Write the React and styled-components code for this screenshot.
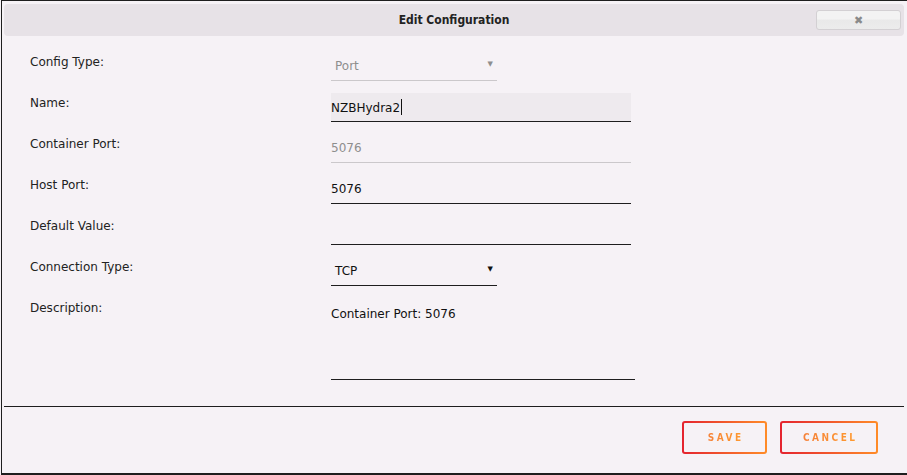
import React from 'react';
import styled, { createGlobalStyle, css } from 'styled-components';

const GlobalStyle = createGlobalStyle`
  html, body {
    margin: 0;
    padding: 0;
    background: #f6f2f6;
    overflow: hidden;
  }
  * {
    box-sizing: border-box;
  }
`;

const Dialog = styled.div`
  margin-left: 1px;
  width: 906px;
  height: 475px;
  border-top: 1px solid #1e1e1e;
  border-left: 1px solid #1e1e1e;
  border-bottom: 2px solid #1e1e1e;
  background: #f6f2f6;
  padding: 3px 3px 0 2px;
  display: flex;
  flex-direction: column;
  font-family: 'DejaVu Sans', Verdana, sans-serif;
  color: #222;
`;

const TitleBar = styled.div`
  height: 32px;
  background: #e7e2e7;
  border-radius: 4px;
  display: flex;
  align-items: center;
  justify-content: center;
  position: relative;
`;

const Title = styled.span`
  font-family: 'DejaVu Sans Condensed', 'DejaVu Sans', sans-serif;
  font-weight: bold;
  font-size: 12px;
  color: #222;
`;

const CloseButton = styled.button`
  position: absolute;
  right: 3px;
  top: 6px;
  width: 85px;
  height: 20px;
  border: 1px solid #d3d0d3;
  border-radius: 3px;
  background: linear-gradient(#f3f3f3 0%, #f3f3f3 45%, #e9e9e9 50%, #ececec 100%);
  color: #8a8a8a;
  font-size: 11px;
  line-height: 1;
  padding: 0;
  display: flex;
  align-items: center;
  justify-content: center;
`;

const Body = styled.div`
  padding: 5px 0 0 26px;
  display: grid;
  grid-template-columns: 301px 1fr;
  grid-template-rows: repeat(6, 41px) auto;
`;

const Label = styled.div`
  font-size: 12px;
  line-height: 16px;
  padding-top: 13px;
  color: #222;
`;

const Field = styled.div`
  margin-top: 11px;
  height: 29px;
  width: ${(p) => p.$w || 300}px;
  display: flex;
  align-items: center;
  justify-content: space-between;
  padding-left: ${(p) => (p.$pad ? 4 : 0)}px;
  padding-right: 4px;
  font-size: 12px;
  border-bottom: 1px solid ${(p) => (p.$muted ? '#cbc8cb' : '#1e1e1e')};
  color: ${(p) => (p.$muted ? '#8e8e8e' : '#111')};
  ${(p) =>
    p.$filled &&
    css`
      background: #eeeaee;
    `}
`;

const Caret = styled.span`
  display: inline-block;
  width: 1px;
  height: 16px;
  background: #111;
  margin-left: 1px;
  vertical-align: -3px;
`;

const Arrow = styled.span`
  font-size: 7px;
  color: ${(p) => (p.$muted ? '#8e8e8e' : '#111')};
  margin-top: -4px;
`;

const TextArea = styled.div`
  margin-top: 11px;
  width: 304px;
  height: 82px;
  padding-top: 8px;
  font-size: 12px;
  line-height: 16px;
  color: #111;
  border-bottom: 1px solid #1e1e1e;
`;

const Divider = styled.div`
  margin-top: 26px;
  height: 1px;
  background: #1e1e1e;
`;

const Footer = styled.div`
  display: flex;
  justify-content: flex-end;
  gap: 13px;
  padding: 14px 26px 0 0;
`;

const ActionButton = styled.button`
  width: ${(p) => p.$w}px;
  height: 33px;
  border: 2px solid transparent;
  border-radius: 3px;
  background: linear-gradient(#f6f2f6, #f6f2f6) padding-box,
    linear-gradient(90deg, #e4232f, #ff8c28) border-box;
  padding: 0;
  font-family: 'DejaVu Sans Condensed', 'DejaVu Sans', sans-serif;
  font-weight: bold;
  font-size: 10px;
  letter-spacing: 2.5px;
`;

const ButtonText = styled.span`
  background: linear-gradient(90deg, #f5803a, #ff9a2e);
  -webkit-background-clip: text;
  background-clip: text;
  color: transparent;
  padding-left: 2.5px;
`;

export default function App() {
  return (
    <>
      <GlobalStyle />
      <Dialog>
        <TitleBar>
          <Title>Edit Configuration</Title>
          <CloseButton>✖</CloseButton>
        </TitleBar>
        <Body>
          <Label>Config Type:</Label>
          <Field $w={166} $pad $muted>
            Port
            <Arrow $muted>▼</Arrow>
          </Field>

          <Label>Name:</Label>
          <Field $filled>
            <span>
              NZBHydra2
              <Caret />
            </span>
          </Field>

          <Label>Container Port:</Label>
          <Field $muted>5076</Field>

          <Label>Host Port:</Label>
          <Field>5076</Field>

          <Label>Default Value:</Label>
          <Field />

          <Label>Connection Type:</Label>
          <Field $w={166} $pad>
            TCP
            <Arrow>▼</Arrow>
          </Field>

          <Label>Description:</Label>
          <TextArea>Container Port: 5076</TextArea>
        </Body>
        <Divider />
        <Footer>
          <ActionButton $w={85}>
            <ButtonText>SAVE</ButtonText>
          </ActionButton>
          <ActionButton $w={98}>
            <ButtonText>CANCEL</ButtonText>
          </ActionButton>
        </Footer>
      </Dialog>
    </>
  );
}
